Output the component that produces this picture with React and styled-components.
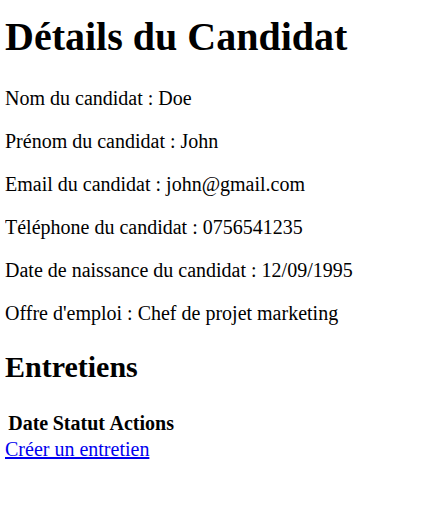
import React from 'react';
import styled, { createGlobalStyle } from 'styled-components';

const Global = createGlobalStyle`
  body {
    margin: 13px 5px 5px;
    font-family: "Liberation Serif", "Times New Roman", serif;
    font-size: 20px;
    background: #fff;
    color: #000;
  }
`;

const Title = styled.h1`
  font-size: 40px;
  font-weight: bold;
  margin: 0 0 26.8px;
`;

const Field = styled.p`
  margin: 20px 0;
`;

const SubTitle = styled.h2`
  font-size: 30px;
  font-weight: bold;
  margin: 25px 0;
`;

const Table = styled.table`
  border-spacing: 2.5px;
  font-size: 20px;
`;

const HeadCell = styled.th`
  padding: 1.25px;
  font-weight: bold;
`;

const Link = styled.a`
  color: #0000ee;
  text-decoration: underline;
`;

const fields = [
  ['Nom du candidat', 'Doe'],
  ['Prénom du candidat', 'John'],
  ['Email du candidat', 'john@gmail.com'],
  ['Téléphone du candidat', '0756541235'],
  ['Date de naissance du candidat', '12/09/1995'],
  ["Offre d'emploi", 'Chef de projet marketing'],
];

export default function App() {
  return (
    <>
      <Global />
      <Title>Détails du Candidat</Title>
      {fields.map(([label, value]) => (
        <Field key={label}>
          {label} : {value}
        </Field>
      ))}
      <SubTitle>Entretiens</SubTitle>
      <Table>
        <thead>
          <tr>
            <HeadCell>Date</HeadCell>
            <HeadCell>Statut</HeadCell>
            <HeadCell>Actions</HeadCell>
          </tr>
        </thead>
        <tbody></tbody>
      </Table>
      <Link href="#">Créer un entretien</Link>
    </>
  );
}
